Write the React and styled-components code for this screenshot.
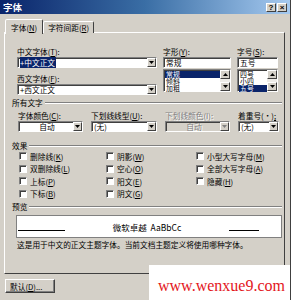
import React from 'react';
import styled, { createGlobalStyle } from 'styled-components';

const FONT = `"Noto Sans CJK SC", "Noto Sans", sans-serif`;

const Global = createGlobalStyle`
  html, body { margin: 0; padding: 0; background: #D4D0C8; }
  body { font-family: ${FONT}; }
  * { box-sizing: border-box; }
`;

const Window = styled.div`
  position: relative;
  width: 291px;
  height: 300px;
  background: #D4D0C8;
  overflow: hidden;
  display: flex;
  flex-direction: column;
  font-family: ${FONT};
  font-size: 7.7px;
  line-height: 9px;
  color: #000;
  border-right: 1px solid #404040;
`;

const TitleBar = styled.div`
  flex: none;
  height: 14px;
  display: flex;
  align-items: center;
  justify-content: space-between;
  padding: 0 3px 0 3px;
  background: linear-gradient(to right, #0A246A 0%, #3A6EA5 50%, #A6CAF0 100%);
  color: #fff;
  font-weight: bold;
  font-size: 9.5px;
`;

const TitleButtons = styled.div`
  display: flex;
  gap: 1px;
`;

const TitleButton = styled.div`
  width: 10px;
  height: 9px;
  background: #D4D0C8;
  border: 1px solid;
  border-color: #fff #404040 #404040 #fff;
  color: #000;
  font-family: "Liberation Sans", sans-serif;
  font-size: 8px;
  font-weight: bold;
  line-height: 7px;
  text-align: center;
`;

const Body = styled.div`
  display: flex;
  flex-direction: column;
  padding: 4px 5px 0 4px;
`;

const TabRow = styled.div`
  display: flex;
  align-items: flex-end;
  height: 15px;
  padding-left: 1px;
  position: relative;
  z-index: 2;
`;

const Tab = styled.div`
  height: ${p => (p.$active ? 15 : 12)}px;
  margin-bottom: ${p => (p.$active ? -1 : 0)}px;
  padding: 0 ${p => (p.$active ? 5 : 4)}px;
  display: flex;
  align-items: center;
  background: #D4D0C8;
  border: 1px solid;
  border-bottom: none;
  border-color: #fff #404040 transparent #fff;
  border-radius: 2px 2px 0 0;
  white-space: nowrap;
`;

const Panel = styled.div`
  height: 242px;
  margin-top: -1px;
  border: 1px solid;
  border-color: #fff #404040 #404040 #fff;
  display: flex;
  flex-direction: column;
`;

const TopGrid = styled.div`
  display: grid;
  grid-template-columns: 140px 68px 41px;
  column-gap: 6px;
  margin-top: 14px;
  padding-left: 12px;
`;

const Col = styled.div`
  display: flex;
  flex-direction: column;
`;

const Label = styled.div`
  height: 9px;
  line-height: 9px;
  white-space: nowrap;
  margin-top: ${p => p.$mt || 0}px;
  color: ${p => (p.$disabled ? '#808080' : '#000')};
  text-shadow: ${p => (p.$disabled ? '1px 1px 0 #fff' : 'none')};
`;

const Sunken = styled.div`
  position: relative;
  height: 11px;
  margin-top: 1px;
  background: ${p => (p.$disabled ? '#D4D0C8' : '#fff')};
  border: 1px solid;
  border-color: #808080 #fff #fff #808080;
  box-shadow: inset 1px 1px 0 #404040;
  display: flex;
  align-items: center;
  padding-left: 2px;
  white-space: nowrap;
  line-height: 9px;
`;

const ComboText = styled.div`
  flex: 1;
  text-align: ${p => (p.$center ? 'center' : 'left')};
  color: ${p => (p.$disabled ? '#808080' : '#000')};
  text-shadow: ${p => (p.$disabled ? '1px 1px 0 #fff' : 'none')};
`;

const Selected = styled.span`
  background: #0A246A;
  color: #fff;
  padding-right: 1px;
`;

const DropButton = styled.div`
  width: 9px;
  height: 9px;
  flex: none;
  background: #D4D0C8;
  border: 1px solid;
  border-color: #fff #404040 #404040 #fff;
  display: flex;
  align-items: center;
  justify-content: center;
`;

const Arrow = ({ up, color = '#000' }) => (
  <svg width="5" height="3" viewBox="0 0 5 3">
    <polygon points={up ? '0,3 5,3 2.5,0' : '0,0 5,0 2.5,3'} fill={color} />
  </svg>
);

const ListBox = styled.div`
  height: 23px;
  margin-top: 1px;
  background: #fff;
  border: 1px solid;
  border-color: #808080 #fff #fff #808080;
  box-shadow: inset 1px 1px 0 #404040;
  display: flex;
`;

const ListItems = styled.div`
  flex: 1;
  display: flex;
  flex-direction: column;
  padding: 1px 0 0 1px;
`;

const ListItem = styled.div`
  height: 7px;
  line-height: 7px;
  font-size: 6.9px;
  padding-left: 1px;
  background: ${p => (p.$sel ? '#0A246A' : 'transparent')};
  color: ${p => (p.$sel ? '#fff' : '#000')};
  white-space: nowrap;
`;

const ScrollBar = styled.div`
  width: 10px;
  flex: none;
  display: flex;
  flex-direction: column;
  justify-content: space-between;
  background: #EEECE8;
`;

const ScrollBtn = styled.div`
  height: 9px;
  background: #D4D0C8;
  border: 1px solid;
  border-color: #fff #404040 #404040 #fff;
  display: flex;
  align-items: center;
  justify-content: center;
`;

const GroupHeader = styled.div`
  display: flex;
  align-items: center;
  gap: 2px;
  height: 9px;
  margin-top: ${p => p.$mt || 0}px;
  padding-left: 7px;
  padding-right: 2px;
  white-space: nowrap;
`;

const GroupLine = styled.div`
  flex: 1;
  height: 2px;
  border-top: 1px solid #808080;
  border-bottom: 1px solid #fff;
`;

const FourGrid = styled.div`
  display: grid;
  grid-template-columns: 65px 66px 65px 41px;
  column-gap: 8px;
  margin-top: 4px;
  padding-left: 13px;
`;

const CheckGrid = styled.div`
  display: grid;
  grid-template-columns: 87px 90px auto;
  grid-template-rows: repeat(4, 12.5px);
  grid-auto-flow: column;
  margin-top: 0px;
  padding-left: 14px;
`;

const CheckRow = styled.div`
  display: flex;
  align-items: center;
  gap: 3px;
  white-space: nowrap;
`;

const CheckBox = styled.div`
  width: 8px;
  height: 8px;
  flex: none;
  background: #fff;
  border: 1px solid;
  border-color: #808080 #fff #fff #808080;
  box-shadow: inset 1px 1px 0 #404040;
`;

const PreviewBox = styled.div`
  height: 23px;
  margin: 4px 2px 0 11px;
  background: #fff;
  border: 1px solid #808080;
  display: grid;
  grid-template-columns: 1px 47px 1fr auto 1fr 30px 22px;
  align-items: end;
`;

const PreviewLine = styled.div`
  height: 1px;
  background: #000;
  margin-bottom: 6px;
`;

const PreviewText = styled.div`
  font-size: 8.5px;
  line-height: 10px;
  margin-bottom: 5px;
  white-space: nowrap;
  word-spacing: 2px;
`;

const Description = styled.div`
  margin-top: 2px;
  padding-left: 12px;
  white-space: nowrap;
`;

const Footer = styled.div`
  display: flex;
  padding: 5px 0 0 1px;
`;

const Button = styled.div`
  width: 50px;
  height: 14px;
  background: #D4D0C8;
  border: 1px solid;
  border-color: #fff #404040 #404040 #fff;
  box-shadow: inset -1px -1px 0 #808080;
  display: flex;
  align-items: center;
  padding-left: 4px;
  white-space: nowrap;
`;

const Watermark = styled.div`
  position: absolute;
  right: 0;
  bottom: 0;
  width: 141px;
  height: 35px;
  background: #fff;
  color: #E3161C;
  font-family: "Liberation Serif", serif;
  font-size: 16px;
  line-height: 16px;
  padding: 13px 0 0 9px;
  white-space: nowrap;
`;

const K = styled.span`
  text-decoration: underline;
`;

const Combo = ({ children, center, disabled }) => (
  <Sunken $disabled={disabled}>
    <ComboText $center={center} $disabled={disabled}>{children}</ComboText>
    <DropButton>
      <Arrow color={disabled ? '#808080' : '#000'} />
    </DropButton>
  </Sunken>
);

const List = ({ items, sel }) => (
  <ListBox>
    <ListItems>
      {items.map((it, i) => (
        <ListItem key={it} $sel={i === sel}>{it}</ListItem>
      ))}
    </ListItems>
    <ScrollBar>
      <ScrollBtn><Arrow up /></ScrollBtn>
      <ScrollBtn><Arrow /></ScrollBtn>
    </ScrollBar>
  </ListBox>
);

const Check = ({ children }) => (
  <CheckRow>
    <CheckBox />
    <span>{children}</span>
  </CheckRow>
);

export default function App() {
  return (
    <>
      <Global />
      <Window>
        <TitleBar>
          <span>字体</span>
          <TitleButtons>
            <TitleButton>?</TitleButton>
            <TitleButton>×</TitleButton>
          </TitleButtons>
        </TitleBar>
        <Body>
          <TabRow>
            <Tab $active>字体(<K>N</K>)</Tab>
            <Tab>字符间距(<K>R</K>)</Tab>
          </TabRow>
          <Panel>
            <TopGrid>
              <Col>
                <Label>中文字体(<K>T</K>):</Label>
                <Combo><Selected>+中文正文</Selected></Combo>
                <Label $mt={6}>西文字体(<K>F</K>):</Label>
                <Combo>+西文正文</Combo>
              </Col>
              <Col>
                <Label>字形(<K>Y</K>):</Label>
                <Sunken>常规</Sunken>
                <List items={['常规', '倾斜', '加粗']} sel={0} />
              </Col>
              <Col>
                <Label>字号(<K>S</K>):</Label>
                <Sunken>五号</Sunken>
                <List items={['四号', '小四', '五号']} sel={2} />
              </Col>
            </TopGrid>

            <GroupHeader $mt={3}>所有文字<GroupLine /></GroupHeader>
            <FourGrid>
              <Col>
                <Label>字体颜色(<K>C</K>):</Label>
                <Combo center>自动</Combo>
              </Col>
              <Col>
                <Label>下划线线型(<K>U</K>):</Label>
                <Combo>(无)</Combo>
              </Col>
              <Col>
                <Label $disabled>下划线颜色(I):</Label>
                <Combo center disabled>自动</Combo>
              </Col>
              <Col>
                <Label>着重号(·)<K>;</K></Label>
                <Combo>(无)</Combo>
              </Col>
            </FourGrid>

            <GroupHeader $mt={9}>效果<GroupLine /></GroupHeader>
            <CheckGrid>
              <Check>删除线(<K>K</K>)</Check>
              <Check>双删除线(<K>L</K>)</Check>
              <Check>上标(<K>P</K>)</Check>
              <Check>下标(<K>B</K>)</Check>
              <Check>阴影(<K>W</K>)</Check>
              <Check>空心(<K>O</K>)</Check>
              <Check>阳文(<K>E</K>)</Check>
              <Check>阴文(<K>G</K>)</Check>
              <Check>小型大写字母(<K>M</K>)</Check>
              <Check>全部大写字母(<K>A</K>)</Check>
              <Check>隐藏(<K>H</K>)</Check>
            </CheckGrid>

            <GroupHeader $mt={2}>预览<GroupLine /></GroupHeader>
            <PreviewBox>
              <span />
              <PreviewLine />
              <span />
              <PreviewText>微软卓越 AaBbCc</PreviewText>
              <span />
              <PreviewLine />
              <span />
            </PreviewBox>
            <Description>这是用于中文的正文主题字体。当前文档主题定义将使用哪种字体。</Description>
          </Panel>
          <Footer>
            <Button>默认(<K>D</K>)...</Button>
          </Footer>
        </Body>
        <Watermark>www.wenxue9.com</Watermark>
      </Window>
    </>
  );
}
